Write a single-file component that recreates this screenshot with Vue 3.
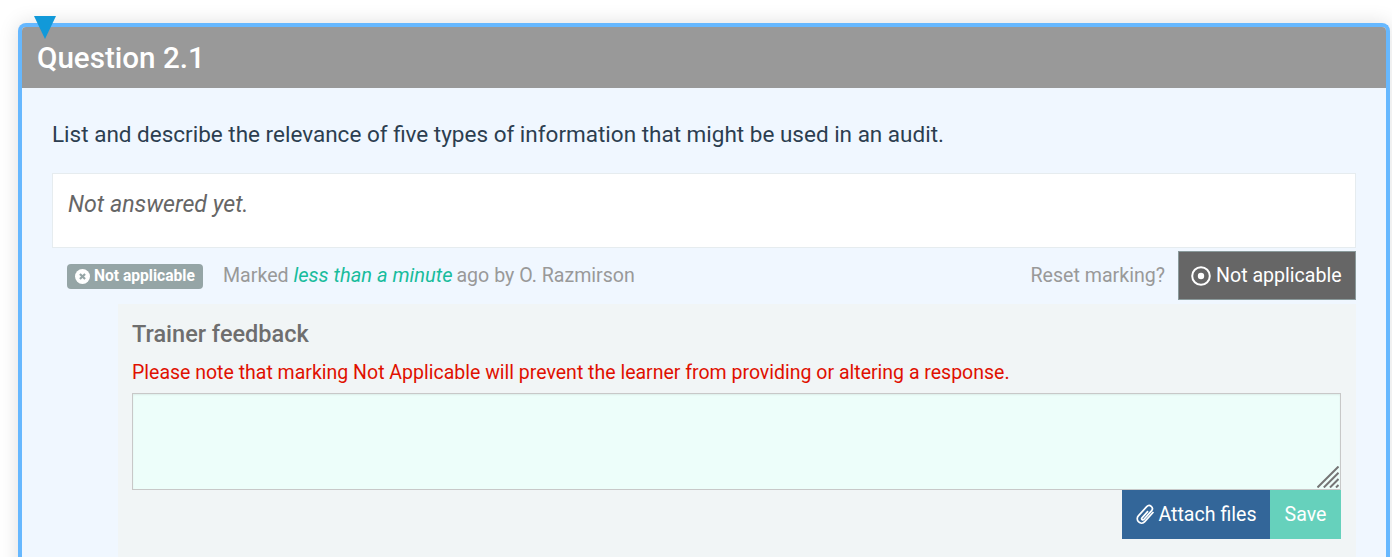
<script setup>
</script>

<template>
  <div class="page">
    <section class="card">
      <span class="marker"></span>
      <header class="head">Question 2.1</header>
      <div class="body">
        <p class="question">List and describe the relevance of five types of information that might be used in an audit.</p>
        <div class="answer">Not answered yet.</div>
        <div class="status">
          <span class="badge">
            <svg class="badge-icon" viewBox="0 0 14 14" width="15" height="15">
              <circle cx="7" cy="7" r="7" fill="#fff" />
              <path d="M4.6 4.6l4.8 4.8M9.4 4.6l-4.8 4.8" stroke="#95a5a6" stroke-width="2" fill="none" />
            </svg>
            Not applicable
          </span>
          <span class="marked">Marked <em>less than a minute</em> ago by O. Razmirson</span>
          <span class="reset">Reset marking?</span>
          <button class="na-btn">
            <svg viewBox="0 0 20 20" width="20" height="20">
              <circle cx="10" cy="10" r="8.8" fill="none" stroke="#fff" stroke-width="2" />
              <circle cx="10" cy="10" r="3.2" fill="#fff" />
            </svg>
            <span>Not applicable</span>
          </button>
        </div>
        <div class="feedback">
          <h3>Trainer feedback</h3>
          <p class="warn">Please note that marking Not Applicable will prevent the learner from providing or altering a response.</p>
          <div class="area-wrap">
            <textarea class="area"></textarea>
            <svg class="grip" viewBox="0 0 22 22" width="22" height="22">
              <path d="M.5 21.5L21.5 .5M6.8 21.5L21.5 6.8M13 21.5L21.5 13M19 21.5L21.5 19" stroke="#757575" stroke-width="2" fill="none" />
            </svg>
          </div>
          <div class="actions">
            <button class="attach">
              <svg viewBox="0 0 20 22" width="20" height="22">
                <g transform="translate(10 10.5) rotate(42)">
                  <path d="M4.6 -7.5V5.5a4.3 4.3 0 0 1-8.6 0V-7a3.2 3.2 0 0 1 6.4 0V4.5a1.2 1.2 0 0 1-2.4 0V-4.5" fill="none" stroke="#fff" stroke-width="1.7" />
                </g>
              </svg>
              <span>Attach files</span>
            </button>
            <button class="save">Save</button>
          </div>
        </div>
      </div>
    </section>
  </div>
</template>

<style>
html, body { margin: 0; background: #fff; overflow: hidden; }
</style>

<style scoped>
.page {
  height: 557px;
  padding: 23px 2px 0 18px;
  box-sizing: border-box;
  overflow: hidden;
  font-family: Roboto, "Liberation Sans", sans-serif;
}
.card {
  position: relative;
  border: 4px solid #66b8ff;
  border-bottom: 0;
  border-radius: 8px 8px 0 0;
  background: #f0f7ff;
  box-shadow: 0 0 20px rgba(0, 0, 0, .13);
  height: 600px;
}
.marker {
  position: absolute;
  left: 12px;
  top: -11px;
  width: 0;
  height: 0;
  border-left: 11.5px solid transparent;
  border-right: 11.5px solid transparent;
  border-top: 23px solid #1199d9;
}
.head {
  height: 61px;
  box-sizing: border-box;
  padding: 13px 15px 0;
  background: #999;
  color: #fff;
  font-size: 29.6px;
  font-weight: 500;
  line-height: 36px;
  border-radius: 4px 4px 0 0;
}
.body { padding: 0 30px; }
.question {
  margin: 0;
  padding-top: 33px;
  height: 85px;
  box-sizing: border-box;
  color: #2c3e50;
  font-size: 22.5px;
  line-height: 26px;
}
.answer {
  height: 75px;
  box-sizing: border-box;
  padding: 16px 15px;
  background: #fff;
  border: 1px solid #e6ecef;
  color: #666;
  font-size: 23.2px;
  font-style: italic;
  line-height: 28px;
}
.status {
  display: flex;
  align-items: center;
  height: 57px;
  padding: 0 0 2px 15px;
  box-sizing: border-box;
  margin-top: -1px;
}
.badge {
  display: inline-flex;
  align-items: center;
  gap: 4px;
  height: 25px;
  width: 136px;
  margin-top: 3px;
  padding: 0 8px;
  box-sizing: border-box;
  border-radius: 4px;
  background: #95a5a6;
  color: #fff;
  font-size: 15.6px;
  font-weight: 700;
  white-space: nowrap;
}
.marked {
  margin-left: 20px;
  color: #999;
  font-size: 19.6px;
}
.marked em {
  margin-right: -1px;
  color: #18bc9c;
  font-size: 20.1px;
}
.reset {
  margin-left: auto;
  margin-right: 13px;
  margin-top: 2px;
  color: #999;
  font-size: 19.6px;
}
.na-btn {
  display: flex;
  align-items: center;
  gap: 5px;
  width: 178px;
  height: 49px;
  margin-top: 2px;
  padding: 0 12px;
  box-sizing: border-box;
  background: #666;
  border: 1px solid #8a9a9b;
  color: #fff;
  font: 400 19.6px Roboto, sans-serif;
  white-space: nowrap;
}
.feedback {
  margin-left: 66px;
  padding: 14px 15px 0 14px;
  background: #f1f5f6;
  height: 260px;
  box-sizing: border-box;
}
.feedback h3 {
  margin: 0;
  color: #6e6e6e;
  font-size: 23.5px;
  font-weight: 500;
  line-height: 32px;
}
.warn {
  margin: 10px 0 7px;
  color: #e01000;
  font-size: 19.5px;
  line-height: 26px;
}
.area-wrap { position: relative; height: 97px; }
.area {
  display: block;
  width: 100%;
  height: 97px;
  box-sizing: border-box;
  background: #edfefa;
  border: 1px solid #c8c8c8;
  box-shadow: inset 0 1px 2px rgba(0, 0, 0, .07);
  resize: none;
  outline: none;
}
.grip {
  position: absolute;
  right: 2px;
  bottom: 2px;
}
.actions { display: flex; justify-content: flex-end; }
.actions button {
  height: 49px;
  border: 0;
  color: #fff;
  font: 400 19.6px Roboto, sans-serif;
  padding: 0;
  box-sizing: border-box;
}
.attach {
  display: flex;
  align-items: center;
  justify-content: center;
  gap: 3px;
  width: 148px;
  background: #336699;
}
.save { width: 71px; background: #66d1bc; }
</style>
